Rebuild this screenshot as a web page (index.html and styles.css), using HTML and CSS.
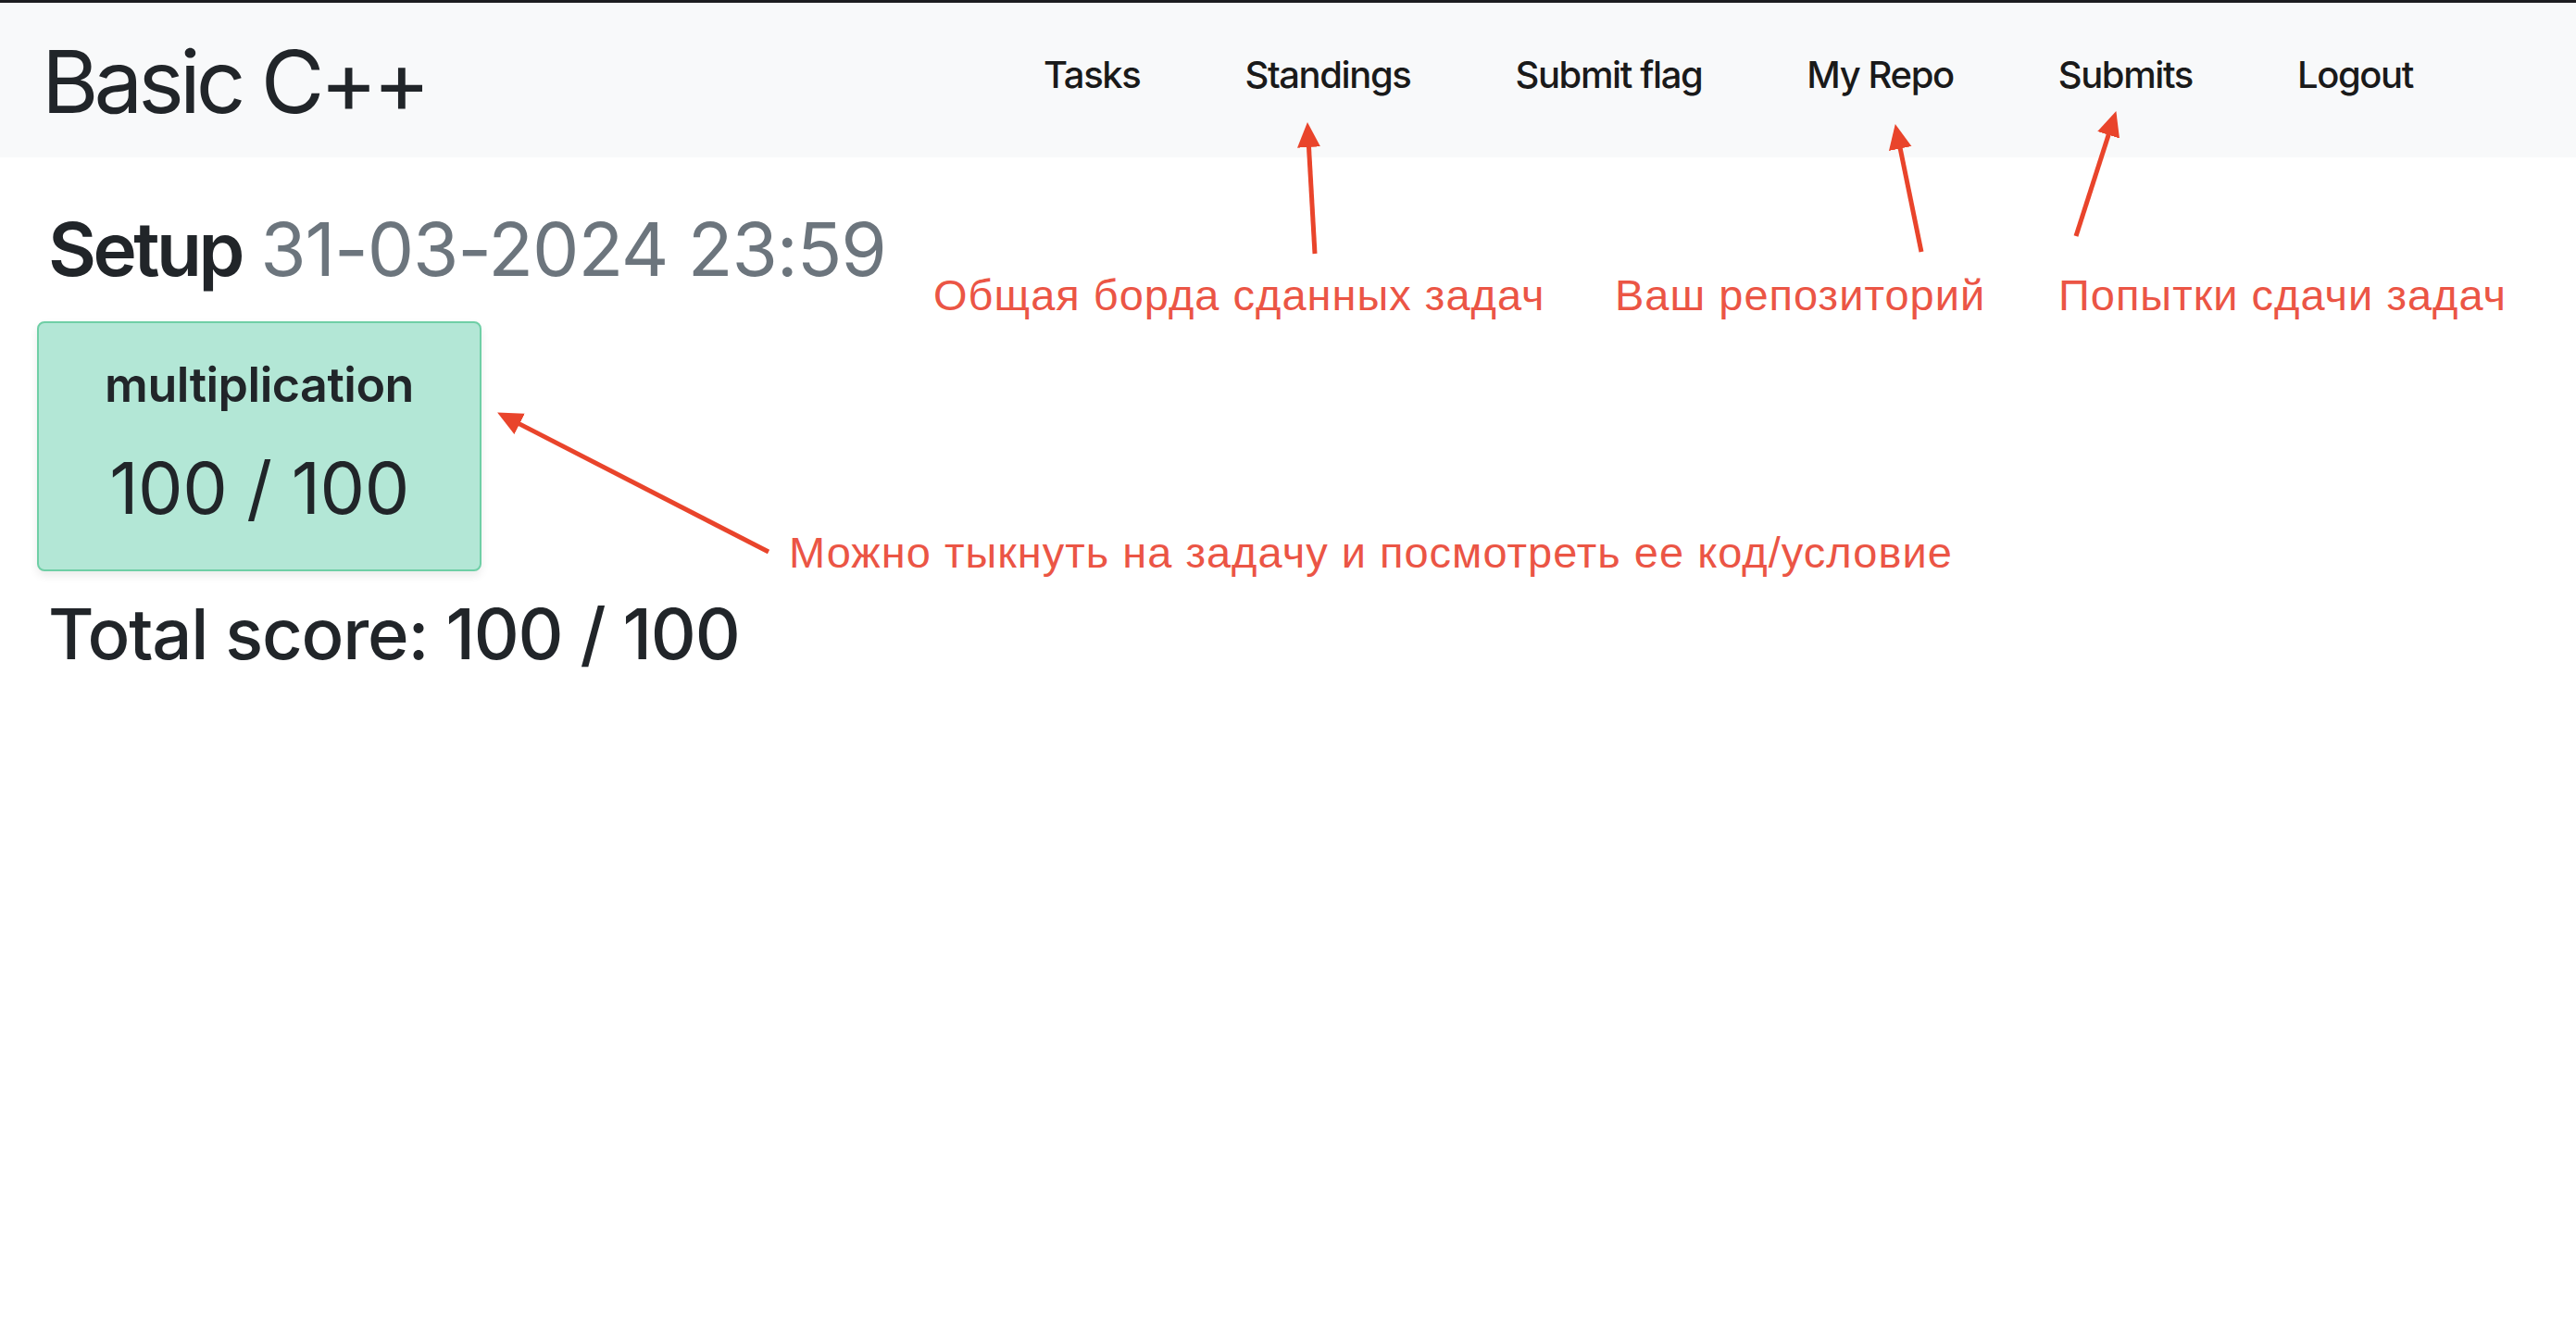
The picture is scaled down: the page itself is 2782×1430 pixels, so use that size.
FILE: index.html
```html
<!DOCTYPE html>
<html lang="ru">
<head>
<meta charset="utf-8">
<title>Basic C++</title>
<link rel="stylesheet" href="styles.css">
</head>
<body>
<div class="topline"></div>
<header class="navbar">
  <a class="brand" href="#">Basic C++</a>
  <nav class="nav">
    <a class="nav-link" href="#">Tasks</a>
    <a class="nav-link" href="#">Standings</a>
    <a class="nav-link" href="#">Submit flag</a>
    <a class="nav-link" href="#">My Repo</a>
    <a class="nav-link" href="#">Submits</a>
    <a class="nav-link" href="#">Logout</a>
  </nav>
</header>
<main class="content">
  <h2 class="deadline"><b>Setup</b> <span class="muted">31-03-2024 23:59</span></h2>
  <div class="tasks">
    <a class="task-card" href="#">
      <div class="task-name">multiplication</div>
      <div class="task-score">100 / 100</div>
    </a>
  </div>
  <h2 class="total">Total score: 100 / 100</h2>
</main>

<div class="note note-standings">Общая борда сданных задач</div>
<div class="note note-repo">Ваш репозиторий</div>
<div class="note note-submits">Попытки сдачи задач</div>
<div class="note note-task">Можно тыкнуть на задачу и посмотреть ее код/условие</div>

<svg class="arrows" width="2782" height="1430" viewBox="0 0 2782 1430">
  <defs>
    <marker id="head" markerUnits="userSpaceOnUse" markerWidth="28" markerHeight="26" refX="16" refY="12.5" orient="auto">
      <path d="M0,0 L27,12.5 L0,25 z" fill="#e9442b"/>
    </marker>
  </defs>
  <g stroke="#e9442b" stroke-width="5" fill="none" marker-end="url(#head)">
    <line x1="1420" y1="274" x2="1412.6" y2="143"/>
    <line x1="2075" y1="272" x2="2049" y2="144.8"/>
    <line x1="2242" y1="255" x2="2282" y2="130.5"/>
    <line x1="830" y1="596" x2="546.9" y2="450.6"/>
  </g>
</svg>
</body>
</html>
```

FILE: styles.css
```css
html, body {
  margin: 0;
  padding: 0;
  background: #ffffff;
}

body {
  font-family: Inter, "Noto Sans", "Liberation Sans", sans-serif;
  color: #212529;
  position: relative;
  min-height: 1430px;
}

.topline {
  height: 3px;
  background: #1c1c20;
}

.navbar {
  height: 167px;
  background: #f8f9fa;
  display: flex;
  align-items: center;
  padding: 0 176px 0 45px;
}

.brand {
  font-size: 94px;
  font-weight: 400;
  letter-spacing: -5px;
  color: #212529;
  text-decoration: none;
  line-height: 1;
  margin-top: 2px;
}

.nav {
  margin-left: auto;
  display: flex;
  gap: 113px;
  margin-top: -12px;
}

.nav-link {
  font-size: 40px;
  font-weight: 500;
  letter-spacing: -1.4px;
  color: #1a1a1a;
  text-decoration: none;
}

.content {
  padding: 0 40px;
}

.deadline {
  margin: 51px 0 30px 12px;
  font-size: 80px;
  font-weight: 500;
  line-height: 1.2;
  letter-spacing: -1.1px;
}

.deadline b {
  font-weight: 600;
  letter-spacing: -3.5px;
}

.muted {
  color: #6c757d;
  font-weight: 400;
}

.tasks {
  display: flex;
}

.task-card {
  box-sizing: border-box;
  width: 480px;
  height: 270px;
  background: #b3e7d6;
  border: 2px solid #6fcfa6;
  border-radius: 8px;
  box-shadow: 0 5px 10px rgba(0, 0, 0, 0.08);
  display: flex;
  flex-direction: column;
  align-items: center;
  text-decoration: none;
  color: #212529;
  padding-top: 36px;
}

.task-name {
  font-size: 52px;
  font-weight: 600;
  letter-spacing: -0.5px;
  line-height: 1.2;
}

.task-score {
  font-size: 77px;
  font-weight: 400;
  letter-spacing: -0.5px;
  line-height: 1.2;
  margin-top: 34px;
}

.total {
  margin: 22px 0 0 12px;
  font-size: 76px;
  font-weight: 500;
  line-height: 1.2;
  letter-spacing: -1.2px;
}

.note {
  position: absolute;
  font-family: "Liberation Sans", Arial, sans-serif;
  font-size: 47px;
  letter-spacing: 1px;
  line-height: 1;
  color: #eb5545;
  white-space: nowrap;
}

.note-standings { left: 1008px; top: 295px; }
.note-repo { left: 1744px; top: 295px; }
.note-submits { left: 2223px; top: 295px; }
.note-task { left: 852px; top: 573px; }

.arrows {
  position: absolute;
  left: 0;
  top: 0;
  pointer-events: none;
}
```
